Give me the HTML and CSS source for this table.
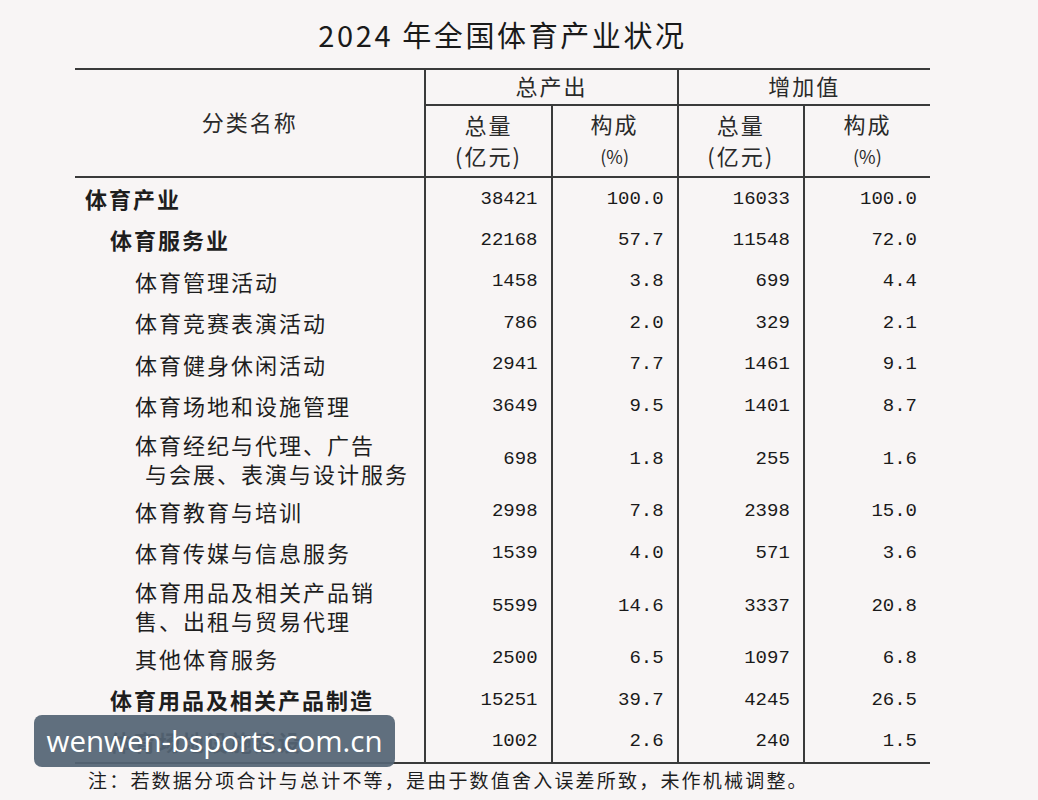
FILE: index.html
```html
<!DOCTYPE html>
<html lang="zh">
<head>
<meta charset="utf-8">
<link rel="stylesheet" href="styles.css">
</head>
<body>
<div class="page">
  <h1 class="title">2024 年全国体育产业状况</h1>
  <table class="tbl">
    <colgroup>
      <col class="c-name"><col class="c-num"><col class="c-num"><col class="c-num"><col class="c-num">
    </colgroup>
    <thead>
      <tr class="h1">
        <th rowspan="2" class="name-h vr">分类名称</th>
        <th colspan="2" class="grp vr">总产出</th>
        <th colspan="2" class="grp">增加值</th>
      </tr>
      <tr class="h2">
        <th class="vr">总量<br>(亿元)</th>
        <th class="vr">构成<br><span class="pct">(%)</span></th>
        <th class="vr">总量<br>(亿元)</th>
        <th>构成<br><span class="pct">(%)</span></th>
      </tr>
    </thead>
    <tbody>
      <tr class="first"><td class="l0 b">体育产业</td><td>38421</td><td>100.0</td><td>16033</td><td>100.0</td></tr>
      <tr><td class="l1 b">体育服务业</td><td>22168</td><td>57.7</td><td>11548</td><td>72.0</td></tr>
      <tr><td class="l2">体育管理活动</td><td>1458</td><td>3.8</td><td>699</td><td>4.4</td></tr>
      <tr><td class="l2">体育竞赛表演活动</td><td>786</td><td>2.0</td><td>329</td><td>2.1</td></tr>
      <tr><td class="l2">体育健身休闲活动</td><td>2941</td><td>7.7</td><td>1461</td><td>9.1</td></tr>
      <tr><td class="l2">体育场地和设施管理</td><td>3649</td><td>9.5</td><td>1401</td><td>8.7</td></tr>
      <tr class="dbl"><td class="l2">体育经纪与代理、广告<br><span class="sub">与会展、表演与设计服务</span></td><td>698</td><td>1.8</td><td>255</td><td>1.6</td></tr>
      <tr><td class="l2">体育教育与培训</td><td>2998</td><td>7.8</td><td>2398</td><td>15.0</td></tr>
      <tr><td class="l2">体育传媒与信息服务</td><td>1539</td><td>4.0</td><td>571</td><td>3.6</td></tr>
      <tr class="dbl"><td class="l2">体育用品及相关产品销<br>售、出租与贸易代理</td><td>5599</td><td>14.6</td><td>3337</td><td>20.8</td></tr>
      <tr><td class="l2">其他体育服务</td><td>2500</td><td>6.5</td><td>1097</td><td>6.8</td></tr>
      <tr><td class="l1 b">体育用品及相关产品制造</td><td>15251</td><td>39.7</td><td>4245</td><td>26.5</td></tr>
      <tr class="last"><td class="l1 b">体育场地设施建设</td><td>1002</td><td>2.6</td><td>240</td><td>1.5</td></tr>
    </tbody>
  </table>
  <p class="note">注：若数据分项合计与总计不等，是由于数值舍入误差所致，未作机械调整。</p>
  <div class="watermark">wenwen-bsports.com.cn</div>
</div>
</body>
</html>
```
FILE: styles.css
```css
html, body {
  margin: 0;
  padding: 0;
  background: #f8f5f5;
}
.page {
  position: relative;
  width: 1038px;
  height: 800px;
  overflow: hidden;
  color: #1e1e1e;
  font-family: "Noto Sans CJK SC", "Noto Sans", sans-serif;
}
.title {
  margin: 0 0 0 75px;
  width: 855px;
  padding-top: 13px;
  height: 54px;
  box-sizing: border-box;
  text-align: center;
  font-size: 29px;
  font-weight: 400;
  line-height: 42px;
  letter-spacing: 2.6px;
  color: #1a1a1a;
}
.tbl {
  margin-left: 75px;
  margin-top: 14px;
  width: 855px;
  border-collapse: collapse;
  table-layout: fixed;
  border-top: 2px solid #3a3a3a;
  border-bottom: 2px solid #3a3a3a;
}
.c-name { width: 350px; }
.c-num { width: 126px; }
.tbl th {
  font-weight: 400;
  font-size: 22px;
  letter-spacing: 2px;
  line-height: 31px;
  padding: 0;
  text-align: center;
  color: #2a2a2a;
}
.tbl .h1 th { height: 31px; padding-bottom: 3px; }
.tbl .h1 .grp { border-bottom: 2px solid #3a3a3a; }
.tbl .h2 th { height: 68px; padding-bottom: 2px; vertical-align: middle; }
.tbl thead { border-bottom: 2px solid #3a3a3a; }
.tbl .h1 .name-h { vertical-align: middle; padding-bottom: 4px; }
.pct { font-size: 18px; letter-spacing: 0; }
.vr { border-right: 2px solid #3a3a3a; }
.tbl td {
  height: 41.5px;
  padding: 0 13px 0 0;
  font-family: "Liberation Mono", "DejaVu Sans Mono", monospace;
  font-size: 19px;
  text-align: right;
  vertical-align: middle;
  border-right: 2px solid #3a3a3a;
  color: #1a1a1a;
}
.tbl td:last-child { border-right: none; }
.tbl td:first-child {
  font-family: "Noto Sans CJK SC", sans-serif;
  font-size: 22px;
  letter-spacing: 2px;
  text-align: left;
  padding-right: 0;
  color: #1e1e1e;
  line-height: 29px;
}
.tbl tr.first td { height: 41px; }
.tbl tr.dbl td { height: 64px; }
.tbl tr.last td { height: 41px; }
.tbl td.l0 { padding-left: 10px; }
.tbl td.l1 { padding-left: 35px; }
.tbl td.l2 { padding-left: 60px; }
.b { font-weight: 700; }
.sub { padding-left: 10px; }
.note {
  margin: 3px 0 0 88px;
  font-size: 19px;
  letter-spacing: 2.2px;
  line-height: 26px;
  color: #1e1e1e;
}
.watermark {
  position: absolute;
  left: 34px;
  top: 715px;
  width: 361px;
  height: 52px;
  border-radius: 8px;
  background: rgba(84, 100, 116, 0.93);
  color: #ffffff;
  font-family: "Open Sans", "Noto Sans", sans-serif;
  font-size: 29.5px;
  line-height: 52px;
  text-align: center;
  letter-spacing: 0;
}
```
